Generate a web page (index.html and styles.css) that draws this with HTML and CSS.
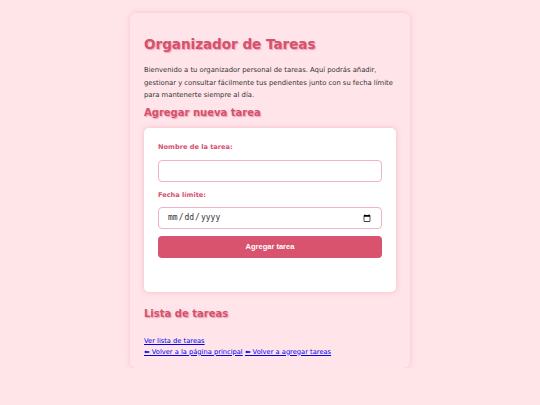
FILE: index.html
```html
<!DOCTYPE html>
<html lang="es">
<head>
<meta charset="utf-8">
<title>Organizador de Tareas</title>
<link rel="stylesheet" href="styles.css">
</head>
<body>
<main class="card">
  <h1 class="title">Organizador de Tareas</h1>
  <p class="intro">Bienvenido a tu organizador personal de tareas. Aquí podrás añadir, gestionar y consultar fácilmente tus pendientes junto con su fecha límite para mantenerte siempre al día.</p>
  <h2 class="subtitle">Agregar nueva tarea</h2>
  <form class="form-box">
    <label class="label" for="nombre">Nombre de la tarea:</label>
    <input class="field" type="text" id="nombre">
    <label class="label" for="fecha">Fecha límite:</label>
    <input class="field date" type="date" id="fecha">
    <button class="btn" type="button">Agregar tarea</button>
  </form>
  <h2 class="subtitle list-title">Lista de tareas</h2>
  <div class="links">
    <a href="#">Ver lista de tareas</a><br>
    <a href="#">⬅ Volver a la página principal</a> <a href="#">⬅ Volver a agregar tareas</a>
  </div>
</main>
</body>
</html>
```
FILE: styles.css
```css
html, body {
  margin: 0;
  padding: 0;
}
body {
  background: #ffe4e8;
  font-family: "DejaVu Sans", Verdana, sans-serif;
  padding-top: 13px;
}
.card {
  width: 252px;
  margin: 0 auto;
  background: #ffe4e9;
  border-radius: 6px;
  box-shadow: 0 0 5px rgba(230, 150, 170, 0.45);
  padding: 22px 14px 10px;
}
.title {
  margin: 0;
  font-size: 13.5px;
  line-height: 18px;
  color: #d4526f;
  text-shadow: 1px 1px 1px rgba(214, 80, 111, 0.45);
}
.intro {
  margin: 11px 0 0;
  font-size: 6.8px;
  line-height: 12.5px;
  color: #333;
}
.subtitle {
  margin: 4px 0 0;
  font-size: 10px;
  line-height: 13px;
  color: #d4526f;
  text-shadow: 1px 1px 1px rgba(214, 80, 111, 0.45);
}
.form-box {
  margin-top: 9px;
  background: #fff;
  border-radius: 5px;
  box-shadow: 0 0 5px rgba(230, 150, 170, 0.5);
  padding: 14px 14px 34px;
  display: flex;
  flex-direction: column;
}
.label {
  font-size: 6.6px;
  font-weight: bold;
  color: #d4526f;
  line-height: 10px;
  margin-bottom: 8px;
}
.field {
  box-sizing: border-box;
  height: 22px;
  border: 1px solid #f0b3c3;
  border-radius: 4px;
  padding: 0 8px;
  font-size: 8px;
  margin: 0 0 8px;
  background: #fff;
}
.date {
  font-family: "DejaVu Sans Mono", monospace;
  color: #333;
  margin-bottom: 7px;
}
.label + .date {
  margin-top: -1px;
}
.btn {
  height: 22px;
  border: none;
  border-radius: 4px;
  background: #d9536f;
  color: #fff;
  font-family: "Liberation Sans", Arial, sans-serif;
  font-weight: bold;
  font-size: 7.5px;
}
.list-title {
  margin-top: 15px;
}
.links {
  margin-top: 16px;
  font-size: 6.7px;
  line-height: 11px;
}
.links a {
  color: #0000ee;
}
```
